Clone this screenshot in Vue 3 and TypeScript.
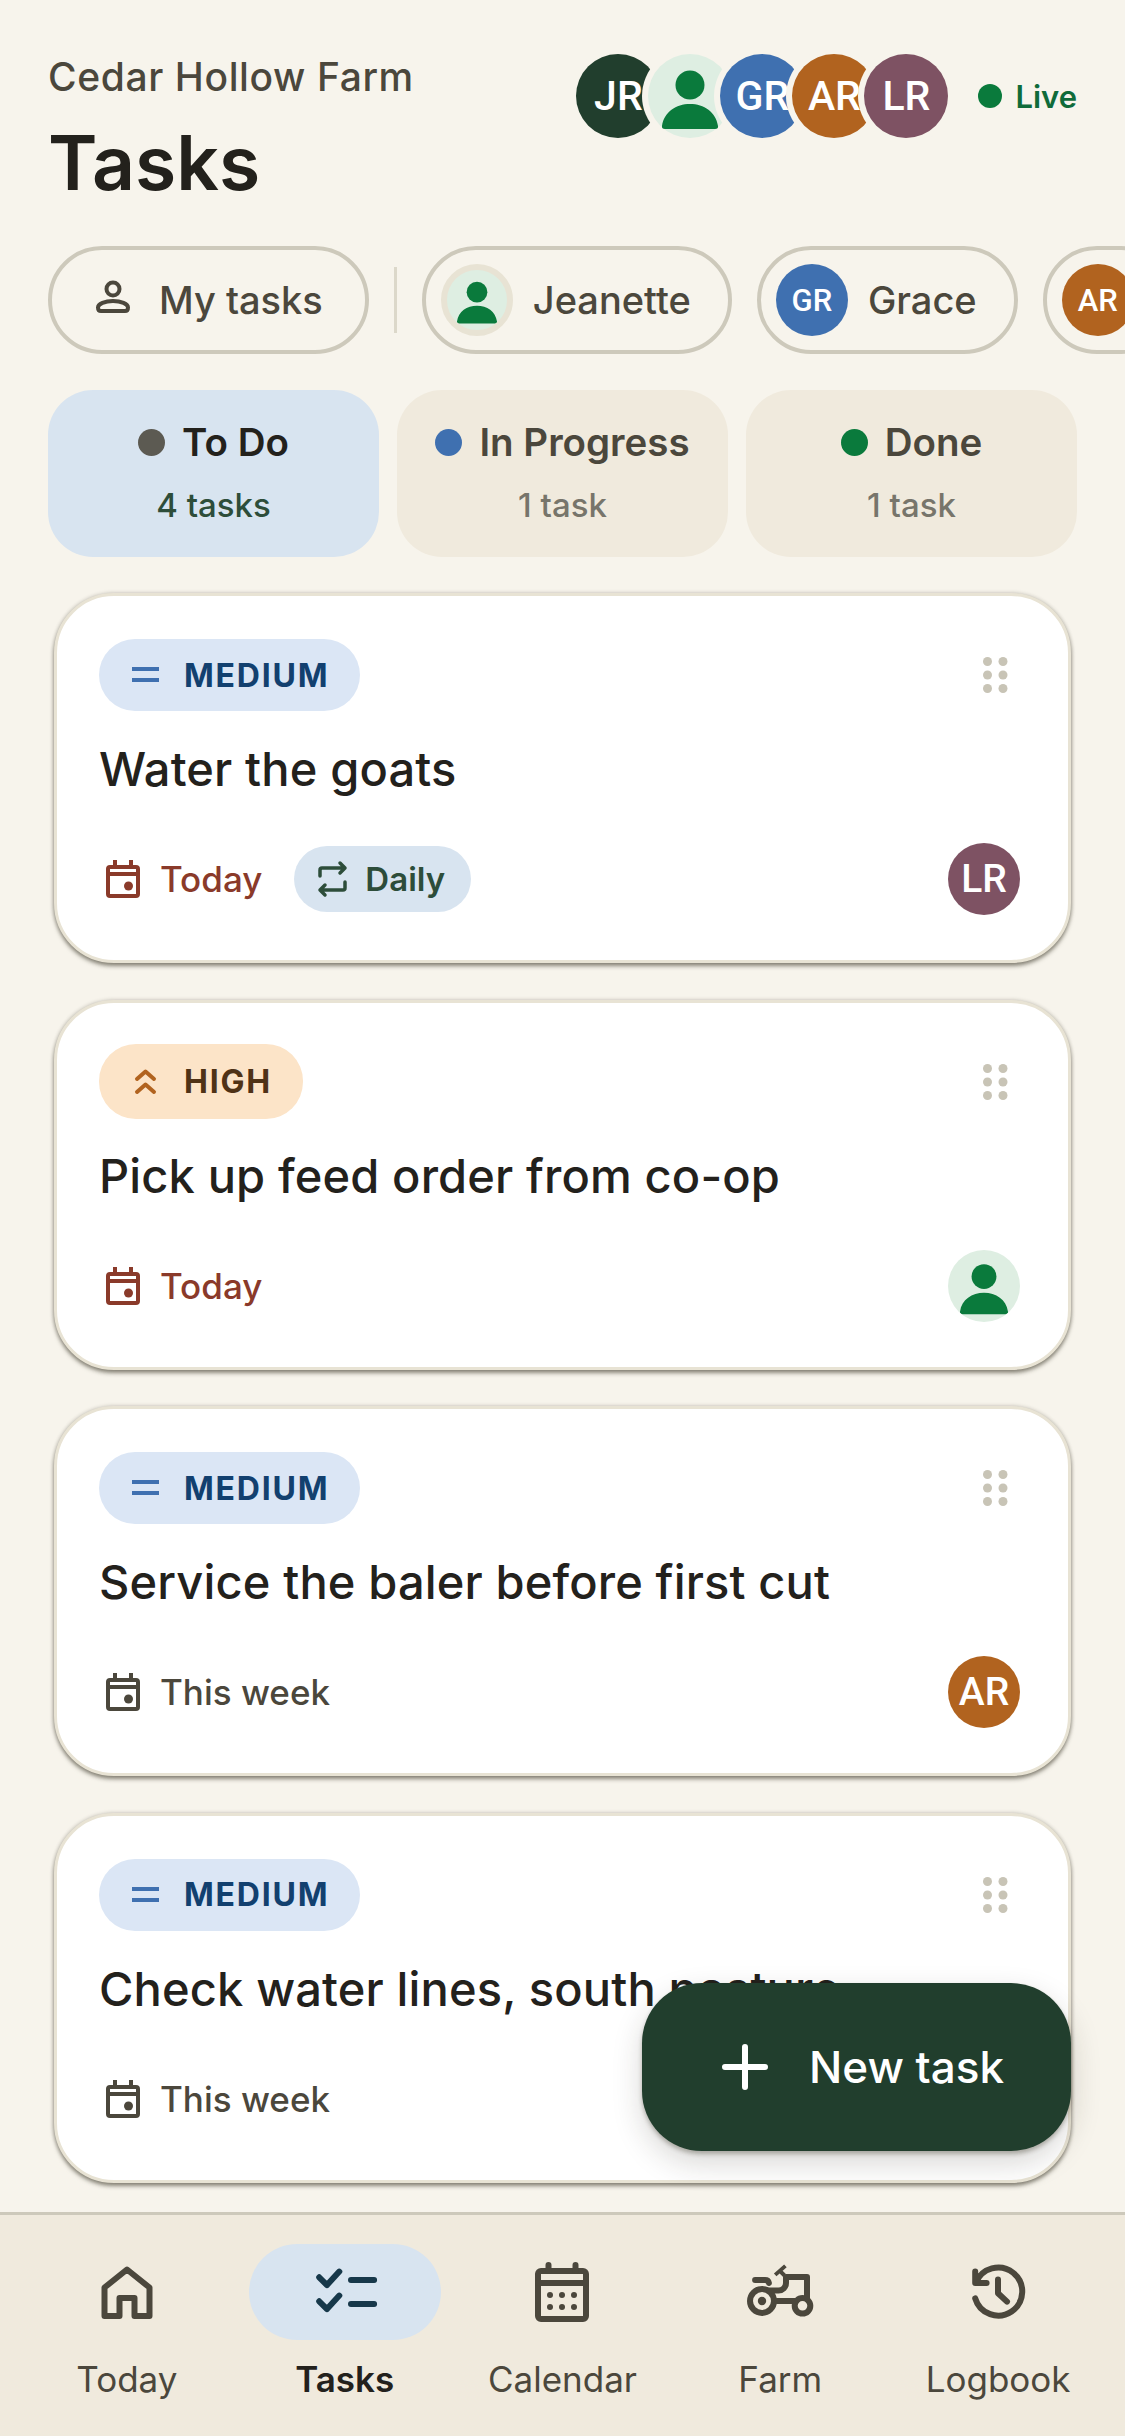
<script setup lang="ts">
type Person = { initials: string; color: string }

interface Task {
  title: string
  priority: 'medium' | 'high'
  due: string
  overdue: boolean
  repeat?: string
  owner?: Person | 'me'
}

const jr: Person = { initials: 'JR', color: '#213e2d' }
const gr: Person = { initials: 'GR', color: '#3f70b0' }
const ar: Person = { initials: 'AR', color: '#b1631f' }
const lr: Person = { initials: 'LR', color: '#7e5263' }

const tabs = [
  { name: 'To Do', count: '4 tasks', dot: '#5c5a52', active: true },
  { name: 'In Progress', count: '1 task', dot: '#3f70b0', active: false },
  { name: 'Done', count: '1 task', dot: '#0a7a3c', active: false },
]

const tasks: Task[] = [
  { title: 'Water the goats', priority: 'medium', due: 'Today', overdue: true, repeat: 'Daily', owner: lr },
  { title: 'Pick up feed order from co-op', priority: 'high', due: 'Today', overdue: true, owner: 'me' },
  { title: 'Service the baler before first cut', priority: 'medium', due: 'This week', overdue: false, owner: ar },
  { title: 'Check water lines, south pasture', priority: 'medium', due: 'This week', overdue: false },
]

const nav = ['Today', 'Tasks', 'Calendar', 'Farm', 'Logbook']
</script>

<template>
  <div class="app">
    <main class="scroll">
      <header class="header">
        <div>
          <div class="farm">Cedar Hollow Farm</div>
          <h1 class="title">Tasks</h1>
        </div>
        <div class="presence">
          <div class="stack">
            <span class="avatar big ringed" :style="{ background: jr.color }">{{ jr.initials }}</span>
            <span class="avatar big ringed me">
              <svg viewBox="0 0 84 84"><circle cx="42" cy="31" r="14.5" /><path d="M14 72C16 58 28 50 42 50s26 8 28 22q.5 3-3 3H17q-3.5 0-3-3Z" /></svg>
            </span>
            <span class="avatar big ringed" :style="{ background: gr.color }">{{ gr.initials }}</span>
            <span class="avatar big ringed" :style="{ background: ar.color }">{{ ar.initials }}</span>
            <span class="avatar big ringed" :style="{ background: lr.color }">{{ lr.initials }}</span>
          </div>
          <span class="live"><i class="live-dot"></i>Live</span>
        </div>
      </header>

      <div class="chips">
        <button class="chip mine">
          <svg class="chip-icon" viewBox="0 0 48 48" fill="none" stroke="currentColor" stroke-width="4">
            <circle cx="24" cy="13" r="6.5" />
            <path d="M9 31.5c0-3.5 7-6.5 15-6.5s15 3 15 6.5c0 2-1 3.5-3 3.5H12c-2 0-3-1.500-3-3.500Z" />
          </svg>
          My tasks
        </button>
        <span class="divider"></span>
        <button class="chip">
          <span class="avatar small me outlined">
            <svg viewBox="0 0 84 84"><circle cx="42" cy="31" r="14.5" /><path d="M14 72C16 58 28 50 42 50s26 8 28 22q.5 3-3 3H17q-3.5 0-3-3Z" /></svg>
          </span>
          Jeanette
        </button>
        <button class="chip">
          <span class="avatar small" :style="{ background: gr.color }">GR</span>
          Grace
        </button>
        <button class="chip">
          <span class="avatar small" :style="{ background: ar.color }">AR</span>
        </button>
      </div>

      <div class="tabs">
        <div v-for="tab in tabs" :key="tab.name" class="tab" :class="{ active: tab.active }">
          <div class="tab-name"><i class="tab-dot" :style="{ background: tab.dot }"></i>{{ tab.name }}</div>
          <div class="tab-count">{{ tab.count }}</div>
        </div>
      </div>

      <section class="list">
        <article v-for="task in tasks" :key="task.title" class="card">
          <div class="card-top">
            <span class="badge" :class="task.priority">
              <svg v-if="task.priority === 'medium'" viewBox="0 0 36 36" fill="none" stroke="#3f70b0" stroke-width="4">
                <path d="M4 12h27M4 23h27" />
              </svg>
              <svg v-else viewBox="0 0 36 36" fill="none" stroke="#b1631f" stroke-width="4" stroke-linecap="round" stroke-linejoin="round">
                <path d="M9 15l8.500-7.500L26 15M9 28l8.500-7.500L26 28" />
              </svg>
              {{ task.priority === 'medium' ? 'MEDIUM' : 'HIGH' }}
            </span>
            <svg class="grip" viewBox="0 0 25 36">
              <circle cx="4.500" cy="4.500" r="4.500" /><circle cx="20" cy="4.500" r="4.500" />
              <circle cx="4.500" cy="18" r="4.500" /><circle cx="20" cy="18" r="4.500" />
              <circle cx="4.500" cy="31.500" r="4.500" /><circle cx="20" cy="31.500" r="4.500" />
            </svg>
          </div>
          <h2 class="task-title">{{ task.title }}</h2>
          <div class="meta">
            <span class="due" :class="{ overdue: task.overdue }">
              <svg viewBox="0 0 48 48" fill="none" stroke="currentColor" stroke-width="4">
                <rect x="9" y="12" width="30" height="29" rx="2" />
                <path d="M16 5v7M32 5v7M9 19h30" />
                <circle cx="29.500" cy="31" r="4.500" fill="currentColor" stroke="none" />
              </svg>
              {{ task.due }}
            </span>
            <span v-if="task.repeat" class="repeat">
              <svg viewBox="0 0 42 42" fill="none" stroke="currentColor" stroke-width="3.500" stroke-linecap="round" stroke-linejoin="round">
                <path d="M8 18v-6a2 2 0 0 1 2-2h23M28 5l5 5-5 5M33 24v6a2 2 0 0 1-2 2H8M13 27l-5 5 5 5" />
              </svg>
              {{ task.repeat }}
            </span>
            <span v-if="task.owner === 'me'" class="avatar small me owner">
              <svg viewBox="0 0 84 84"><circle cx="42" cy="31" r="14.5" /><path d="M14 72C16 58 28 50 42 50s26 8 28 22q.5 3-3 3H17q-3.5 0-3-3Z" /></svg>
            </span>
            <span v-else-if="task.owner" class="avatar small owner" :style="{ background: task.owner.color }">{{ task.owner.initials }}</span>
          </div>
        </article>
      </section>
    </main>

    <button class="fab">
      <svg viewBox="0 0 60 60" fill="none" stroke="#fff" stroke-width="6" stroke-linecap="round"><path d="M30 10v40M10 30h40" /></svg>
      New task
    </button>

    <nav class="nav">
      <div v-for="item in nav" :key="item" class="nav-item" :class="{ current: item === 'Tasks' }">
        <span class="nav-pill">
          <svg viewBox="0 0 24 24" fill="none" stroke="currentColor" stroke-width="2" stroke-linecap="round" stroke-linejoin="round">
            <template v-if="item === 'Today'">
              <path d="M4.500 10.500 12 4.500l7.500 6V20h-5v-6h-5v6h-5Z" />
            </template>
            <template v-else-if="item === 'Tasks'">
              <path d="M3.400 7.100 6 9.700l4.100-4.500M14 8h7.700M3.400 15.100 6 17.700l4.100-4.500M14 16h7.700" />
            </template>
            <template v-else-if="item === 'Calendar'">
              <rect x="4" y="5" width="16" height="16" rx="1" />
              <path d="M7.500 3v2M16.500 3v2M4 9h16" />
              <g fill="currentColor" stroke="none">
                <circle cx="8" cy="13" r="1" /><circle cx="12" cy="13" r="1" /><circle cx="16" cy="13" r="1" />
                <circle cx="8" cy="17" r="1" /><circle cx="12" cy="17" r="1" /><circle cx="16" cy="17" r="1" />
              </g>
            </template>
            <template v-else-if="item === 'Farm'">
              <circle cx="6" cy="15" r="4" />
              <circle cx="6" cy="15" r="1.400" fill="currentColor" stroke="none" />
              <circle cx="19.500" cy="16.600" r="2.600" />
              <path d="M3.700 8H7c.8 0 1.200.5 1.300 1M14 7h7v7M14 7v2a2.500 2.500 0 0 1-2.500 2.500H8.500M11 15h6" />
              <path d="M10.400 6.300 13.800 3.300M12 5l1.500 1.500" stroke-width="1.300" stroke-linecap="butt" />
            </template>
            <template v-else>
              <path d="M4.400 5.200V9h3.800M4.600 9A8 8 0 1 1 4.400 14.100M12 7.800v4.600l3 2.800" />
            </template>
          </svg>
        </span>
        <span class="nav-label">{{ item }}</span>
      </div>
    </nav>
  </div>
</template>

<style scoped>
.app {
  position: relative;
  display: flex;
  flex-direction: column;
  width: 1125px;
  height: 2436px;
  overflow: hidden;
  background: #f7f4ec;
  color: #23211c;
  font-family: Inter, "Liberation Sans", sans-serif;
}
.scroll {
  flex: 1;
  min-height: 0;
  overflow: hidden;
}

.header {
  display: flex;
  justify-content: space-between;
  align-items: flex-start;
  padding: 54px 48px 0;
}
.farm {
  font-size: 39px;
  line-height: 46px;
  font-weight: 500;
  letter-spacing: 0.6px;
  color: #4b473c;
}
.title {
  margin: 18px 0 0;
  font-size: 75px;
  line-height: 90px;
  font-weight: 600;
  color: #23211c;
}
.presence {
  display: flex;
  align-items: center;
  gap: 30px;
}
.stack {
  display: flex;
}
.avatar {
  display: flex;
  align-items: center;
  justify-content: center;
  flex: none;
  border-radius: 50%;
  color: #fff;
  font-family: Roboto, sans-serif;
  font-weight: 500;
  overflow: hidden;
}
.avatar svg {
  width: 100%;
  height: 100%;
  fill: #0a7a3c;
}
.avatar.me {
  background: #deeee2;
}
.big {
  width: 84px;
  height: 84px;
  font-size: 41px;
  overflow: visible;
}
.ringed {
  box-shadow: 0 0 0 6px #f7f4ec;
}
.ringed + .ringed {
  margin-left: -12px;
}
.small {
  width: 72px;
  height: 72px;
  font-size: 31px;
}
.outlined {
  box-sizing: border-box;
  border: 6px solid #e8e3d4;
}
.live {
  display: flex;
  align-items: center;
  gap: 13px;
  font-size: 31px;
  font-weight: 600;
  color: #0f6b3a;
}
.live-dot {
  width: 24px;
  height: 24px;
  border-radius: 50%;
  background: #0a7a3c;
}

.chips {
  display: flex;
  align-items: center;
  gap: 25px;
  margin-top: 38px;
  padding-left: 48px;
}
.chip {
  display: flex;
  align-items: center;
  flex: none;
  gap: 20px;
  box-sizing: border-box;
  height: 108px;
  padding: 0 37px 0 15px;
  border: 4px solid #cdc9bb;
  border-radius: 54px;
  background: none;
  color: #4b473c;
  font: 500 38px Inter, sans-serif;
}
.chip.mine {
  padding-left: 37px;
  padding-right: 42px;
  gap: 22px;
}
.chip-icon {
  width: 48px;
  height: 48px;
}
.divider {
  flex: none;
  width: 3px;
  height: 66px;
  background: #dcd8ca;
}

.tabs {
  display: flex;
  gap: 18px;
  margin-top: 36px;
  padding: 0 48px;
}
.tab {
  flex: 1;
  height: 167px;
  box-sizing: border-box;
  padding-top: 28px;
  border-radius: 45px;
  background: #f0eadd;
  text-align: center;
}
.tab.active {
  background: #d8e4f0;
}
.tab-name {
  display: flex;
  align-items: center;
  justify-content: center;
  gap: 17px;
  font-size: 38.500px;
  line-height: 48px;
  font-weight: 600;
  color: #4b473c;
}
.active .tab-name {
  color: #23211c;
}
.tab-dot {
  width: 27px;
  height: 27px;
  border-radius: 50%;
}
.tab-count {
  margin-top: 18px;
  font-size: 33px;
  line-height: 42px;
  font-weight: 500;
  color: #77756b;
}
.active .tab-count {
  color: #2d4d3a;
}

.list {
  display: flex;
  flex-direction: column;
  gap: 36.500px;
  margin-top: 36px;
  padding: 0 54px;
}
.card {
  padding: 43px 48px 45px 42px;
  border: 3px solid #e8e3d4;
  border-radius: 60px;
  background: #fff;
  box-shadow: 0 3px 4px rgba(40, 36, 20, 0.5), 0 0 4px rgba(40, 36, 20, 0.2);
}
.card-top {
  display: flex;
  justify-content: space-between;
  align-items: center;
}
.badge {
  display: flex;
  align-items: center;
  gap: 20px;
  height: 72px;
  padding: 0 31px 0 29px;
  border-radius: 37px;
  font-size: 32px;
  font-weight: 700;
  letter-spacing: 1.800px;
}
.badge svg {
  width: 36px;
  height: 36px;
}
.badge.medium {
  background: #dbe6f5;
  color: #12406f;
}
.badge.high {
  height: 75px;
  margin: -1.500px 0;
  background: #fce4c8;
  color: #4f3216;
}
.grip {
  width: 25px;
  height: 36px;
  margin-right: 12px;
  fill: #c8c4b6;
}
.task-title {
  margin: 28px 0 0;
  font-size: 47px;
  line-height: 60px;
  font-weight: 500;
  letter-spacing: 0.15px;
  color: #23211c;
}
.meta {
  display: flex;
  align-items: center;
  gap: 32px;
  height: 72px;
  margin-top: 44px;
}
.due {
  display: flex;
  align-items: center;
  gap: 13px;
  font-size: 35px;
  font-weight: 500;
  color: #4b473c;
}
.due.overdue {
  color: #8a3a2a;
}
.due svg {
  width: 48px;
  height: 48px;
}
.repeat {
  display: flex;
  align-items: center;
  gap: 11px;
  height: 66px;
  padding: 0 26px 0 18px;
  border-radius: 33px;
  background: #d8e4f0;
  color: #2d4d3a;
  font-size: 33px;
  font-weight: 600;
}
.repeat svg {
  width: 42px;
  height: 42px;
}
.owner {
  margin-left: auto;
  font-size: 39px;
}

.fab {
  position: absolute;
  right: 54px;
  bottom: 285px;
  display: flex;
  align-items: center;
  gap: 34px;
  width: 429px;
  height: 168px;
  padding: 0 0 0 73px;
  border: 0;
  border-radius: 60px;
  background: #213e2d;
  color: #fff;
  font: 500 44px Inter, sans-serif;
  box-shadow: 0 3px 4px rgba(40, 36, 20, 0.3), 0 12px 30px rgba(40, 36, 20, 0.18);
}
.fab svg {
  width: 60px;
  height: 60px;
}

.nav {
  display: flex;
  flex: none;
  height: 224px;
  box-sizing: border-box;
  padding: 29px 18px 0;
  border-top: 3px solid #cdc9bb;
  background: #f0eadd;
}
.nav-item {
  flex: 1;
  display: flex;
  flex-direction: column;
  align-items: center;
  color: #4b473c;
}
.nav-pill {
  display: flex;
  align-items: center;
  justify-content: center;
  width: 192px;
  height: 96px;
  border-radius: 48px;
}
.nav-pill svg {
  width: 72px;
  height: 72px;
}
.current .nav-pill {
  background: #d8e4f0;
  color: #17384a;
}
.nav-label {
  margin-top: 15px;
  font-size: 35px;
  line-height: 48px;
  font-weight: 400;
}
.current .nav-label {
  color: #23211c;
  font-weight: 600;
}
</style>

<style>
html,
body {
  margin: 0;
  background: #f7f4ec;
}
</style>
